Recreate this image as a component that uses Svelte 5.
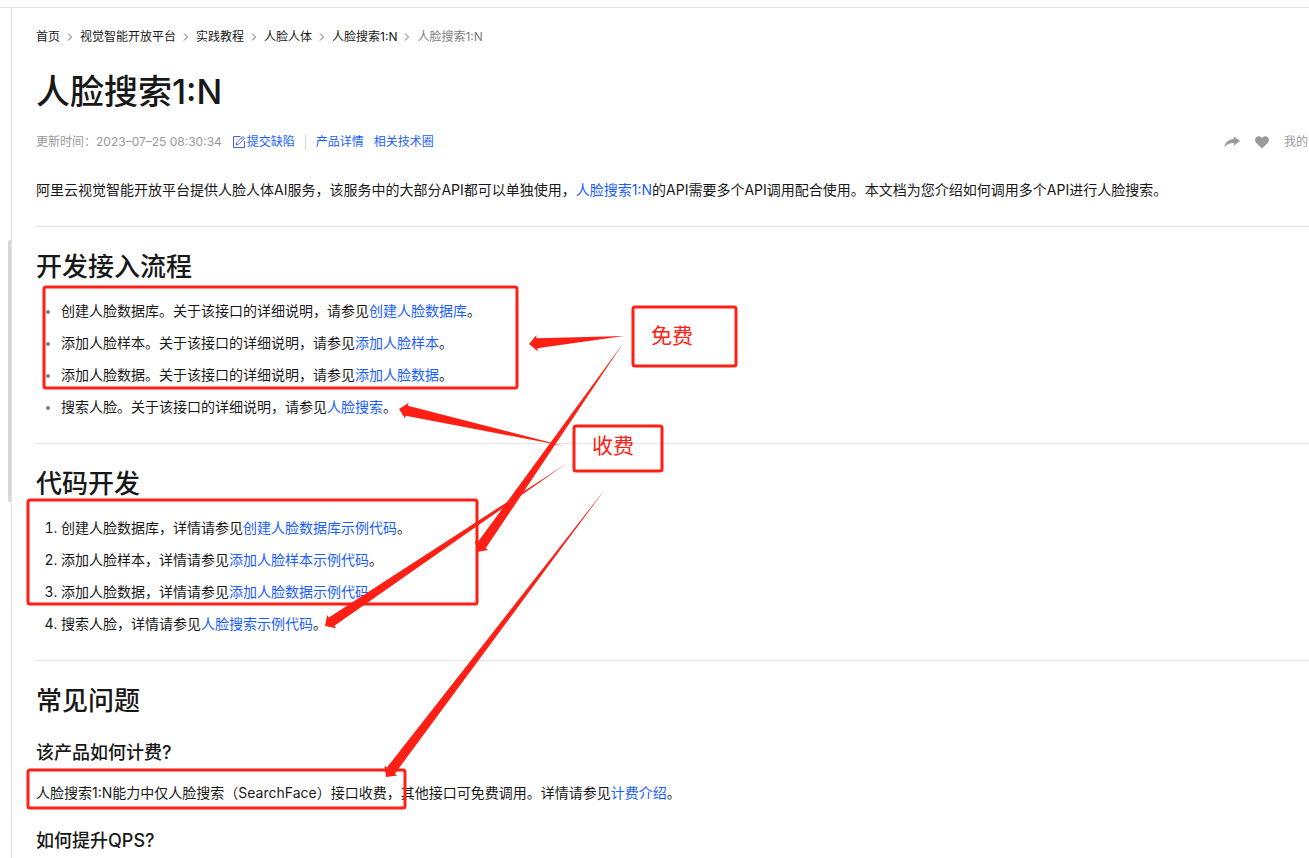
<script>
    const crumbs = ['首页', '视觉智能开放平台', '实践教程', '人脸人体', '人脸搜索1:N'];

    const apis = [
        { name: '创建人脸数据库', link: '创建人脸数据库' },
        { name: '添加人脸样本', link: '添加人脸样本' },
        { name: '添加人脸数据', link: '添加人脸数据' },
        { name: '搜索人脸', link: '人脸搜索' }
    ];

    // red marker boxes drawn over the article
    const boxes = [
        { x: 44, y: 287, w: 473, h: 101 },
        { x: 28, y: 500, w: 449, h: 104 },
        { x: 28, y: 770, w: 377, h: 38 },
        { x: 633, y: 307, w: 103, h: 59 },
        { x: 574, y: 426, w: 88, h: 45 }
    ];

    // [tail x, tail y, tip x, tip y]
    const arrows = [
        [624, 336, 529, 344],
        [624, 342, 477, 552],
        [564, 446, 399, 409],
        [566, 464, 325, 626],
        [606, 488, 386, 777]
    ];

    // tapered arrow: a point at the tail, widest just before the head
    function arrowPoints([x1, y1, x2, y2]) {
        const len = Math.hypot(x2 - x1, y2 - y1);
        const dx = (x2 - x1) / len;
        const dy = (y2 - y1) / len;
        const at = (back, side) => `${x2 - dx * back - dy * side},${y2 - dy * back + dx * side}`;
        return [`${x1},${y1}`, at(8, 5), at(8, 8), at(0, 0), at(8, -8), at(8, -5)].join(' ');
    }
</script>

<div class="page">
    <div class="topbar"></div>
    <div class="layout">
        <div class="sidebar"><div class="thumb"></div></div>

        <main>
            <nav class="crumbs">
                {#each crumbs as crumb}
                    <a href="#top">{crumb}</a>
                    <svg width="6" height="10" viewBox="0 0 6 10"><path d="M1 1.5 4.5 5 1 8.5" /></svg>
                {/each}
                <span>人脸搜索1:N</span>
            </nav>

            <h1>人脸搜索1:N</h1>

            <div class="meta">
                <span class="time">更新时间：<span class="date">2023–07–25 08:30:34</span></span>
                <a class="report" href="#report">
                    <svg width="14" height="14" viewBox="0 0 14 14">
                        <path d="M8.5 1.5H1.5V12.5H12.5V6" />
                        <path d="M4.2 10 4.8 7.5 10.8 1.5 12.6 3.3 6.6 9.3ZM9.4 2.9 11.2 4.7" />
                    </svg>提交缺陷</a>
                <span class="divider"></span>
                <a class="detail" href="#detail">产品详情</a>
                <a href="#circle">相关技术圈</a>
                <div class="actions">
                    <button aria-label="分享">
                        <svg width="16" height="12" viewBox="0 0 16 12"><path d="M10 0.5 16 5 10 9.5V7C6 6.8 3 8 0.3 11.2 1 6.5 4.5 3.2 10 3Z" /></svg>
                    </button>
                    <button aria-label="收藏">
                        <svg width="14" height="13" viewBox="0 0 14 13"><path d="M7 12.6 1.2 7C-0.4 5.3-0.3 2.6 1.3 1.2 3-0.3 5.6 0 7 1.9 8.4 0 11-0.3 12.7 1.2 14.3 2.6 14.4 5.3 12.8 7Z" /></svg>
                    </button>
                    <a class="mine" href="#mine">我的</a>
                </div>
            </div>

            <p class="intro">阿里云视觉智能开放平台提供人脸人体AI服务，该服务中的大部分API都可以单独使用，<a href="#search">人脸搜索1:N</a>的API需要多个API调用配合使用。本文档为您介绍如何调用多个API进行人脸搜索。</p>

            <section>
                <h2>开发接入流程</h2>
                <ul>
                    {#each apis as api}
                        <li>{api.name}。关于该接口的详细说明，请参见<a href="#api">{api.link}</a>。</li>
                    {/each}
                </ul>
            </section>

            <section>
                <h2>代码开发</h2>
                <ol>
                    {#each apis as api}
                        <li>{api.name}，详情请参见<a href="#code">{api.link}示例代码</a>。</li>
                    {/each}
                </ol>
            </section>

            <section class="faq">
                <h2>常见问题</h2>
                <h3>该产品如何计费?</h3>
                <p>人脸搜索1:N能力中仅人脸搜索（SearchFace）接口收费，其他接口可免费调用。详情请参见<a href="#price">计费介绍</a>。</p>
                <h3>如何提升QPS?</h3>
            </section>
        </main>
    </div>

    <!-- annotations -->
    <svg class="marks">
        {#each boxes as b}
            <rect x={b.x} y={b.y} width={b.w} height={b.h} rx="2" />
        {/each}
        {#each arrows as arrow}
            <polygon points={arrowPoints(arrow)} />
        {/each}
        <text x="651" y="343">免费</text>
        <text x="592" y="453">收费</text>
    </svg>
</div>

<style>
    :global(body) {
        background: #fff;
    }

    .page {
        position: relative;
        display: flex;
        flex-direction: column;
        min-height: 100vh;
        overflow: hidden;
        font-family: Inter, 'Noto Sans CJK SC', sans-serif;
        font-size: 14px;
        color: #181818;
    }

    .topbar {
        height: 7px;
        border-bottom: 1px solid #e3e4e6;
    }

    .layout {
        display: flex;
        flex: 1;
    }

    .sidebar {
        flex: none;
        width: 11px;
        border-right: 1px solid #e3e4e6;
    }

    .thumb {
        width: 3px;
        height: 262px;
        margin: 232px 0 0 8px;
        border-radius: 2px 0 0 2px;
        background: #d7d8d9;
    }

    main {
        flex: 1;
        min-width: 0;
        padding: 19px 0 0 24px;
    }

    a {
        color: #1a5eff;
        text-decoration: none;
    }

    .crumbs {
        display: flex;
        align-items: center;
        gap: 7px;
        font-size: 12px;
        line-height: 20px;
    }

    .crumbs a {
        color: #181818;
    }

    .crumbs span {
        color: #808080;
    }

    .crumbs path {
        fill: none;
        stroke: #666;
    }

    h1, h2, h3, p, ul, ol {
        margin: 0;
        font-weight: 500;
    }

    h1 {
        margin-top: 21px;
        font-size: 34px;
        line-height: 48px;
    }

    .meta {
        display: flex;
        align-items: center;
        margin-top: 16px;
        font-size: 12px;
        line-height: 20px;
    }

    .time {
        margin-right: 10px;
        color: #999;
    }

    .report {
        display: flex;
        align-items: center;
        gap: 1px;
    }

    .report path {
        fill: none;
        stroke: #4f5df0;
    }

    .divider {
        width: 1px;
        height: 16px;
        margin: 0 10px;
        background: #d9d9d9;
    }

    .detail {
        margin-right: 10px;
    }

    .actions {
        display: flex;
        align-items: center;
        gap: 15px;
        margin-left: auto;
        padding-right: 1px;
    }

    button {
        display: flex;
        padding: 0;
        border: 0;
        background: none;
        cursor: pointer;
    }

    button path {
        fill: #999;
    }

    .mine {
        color: #999;
    }

    p {
        font-weight: 400;
        line-height: 28px;
    }

    .intro {
        margin: 24px 0 22px;
    }

    section {
        padding: 22px 0 20px;
        border-top: 1px solid #e5e5e5;
    }

    .faq {
        padding-bottom: 0;
    }

    h2 {
        font-size: 26px;
        line-height: 36px;
    }

    h3 {
        margin: 20px 0 12px;
        font-size: 18px;
        line-height: 28px;
    }

    .faq h3:last-child {
        margin-bottom: 0;
    }

    ul, ol {
        margin-top: 10px;
        padding-left: 25px;
        font-weight: 400;
        line-height: 32px;
    }

    ul li::marker {
        font-size: 12px;
        color: #808080;
    }

    .marks {
        position: absolute;
        top: 0;
        left: 0;
        width: 100%;
        height: 100%;
        pointer-events: none;
    }

    .marks rect {
        fill: none;
        stroke: #ff2015;
        stroke-width: 3px;
    }

    .marks polygon {
        fill: #ff2015;
    }

    .marks text {
        font-size: 21px;
        fill: #ff2015;
    }
</style>
